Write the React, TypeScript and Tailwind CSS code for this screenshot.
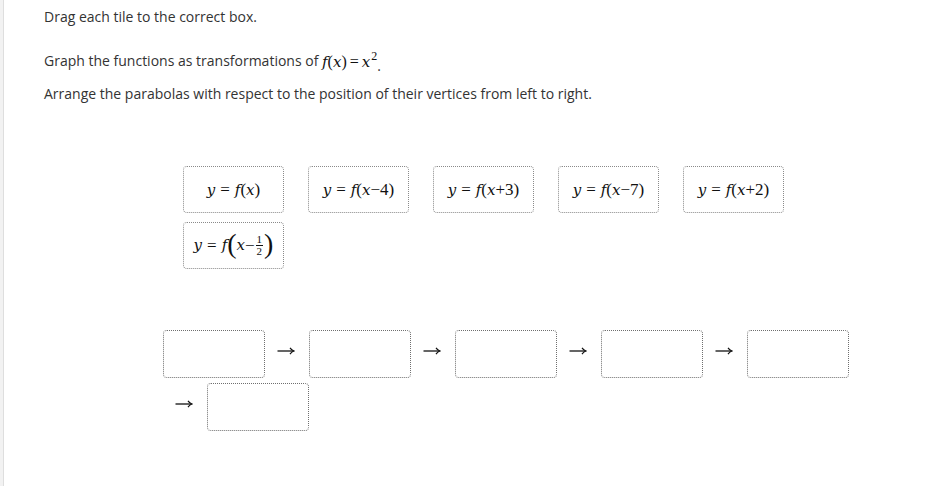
const tiles = ["f(x)", "f(x−4)", "f(x+3)", "f(x−7)", "f(x+2)"];

// Liberation Serif has no italic face here, so variables use DejaVu Serif italic
const serif = "font-['Liberation_Serif',serif]";
const mi = "font-['DejaVu_Serif',serif] italic text-[15px]";

function TileMath({ expr }: { expr: string }) {
  const rest = expr.slice(3, -1);
  return (
    <span className={`${serif} text-[17px] text-[#111] whitespace-nowrap`}>
      <i className={mi}>y</i>
      <span className="mx-[5px]">=</span>
      <i className={mi}>f</i>
      <span>(</span>
      <i className={mi}>x</i>
      {rest && <span>{rest}</span>}
      <span>)</span>
    </span>
  );
}

function HalfTile() {
  return (
    <span className={`${serif} inline-flex items-center text-[17px] text-[#111] whitespace-nowrap`}>
      <i className={mi}>y</i>
      <span className="mx-[5px]">=</span>
      <i className={mi}>f</i>
      <span className="text-[28px] leading-none -mt-[3px]">(</span>
      <i className={mi}>x</i>
      <span>−</span>
      <span className="inline-flex flex-col items-center text-[11px] leading-[11px] mx-[1px]">
        <span>1</span>
        <span className="border-t border-[#111] px-[1px]">2</span>
      </span>
      <span className="text-[28px] leading-none -mt-[3px]">)</span>
    </span>
  );
}

function Tile({ children }: { children: React.ReactNode }) {
  return (
    <div className="w-[101px] h-[47px] flex items-center justify-center rounded-[4px] border border-dotted border-[#8a8a8a] bg-white">
      {children}
    </div>
  );
}

function DropBox() {
  return (
    <div className="w-[102px] h-[48px] rounded-[4px] border border-dotted border-[#6f6f6f] bg-white" />
  );
}

function Arrow() {
  return (
    <div className="w-[44px] h-[48px] flex items-center justify-center">
      <svg width="18" height="10" viewBox="0 0 18 10" className="-mt-[6px] -ml-[2px]">
        <path d="M0.5 5 H16.5" stroke="#111" strokeWidth="1.3" fill="none" />
        <path d="M13 1.8 Q14.6 4.2 17 5 Q14.6 5.8 13 8.2" stroke="#111" strokeWidth="1.2" fill="none" />
      </svg>
    </div>
  );
}

export default function App() {
  const slots = [0, 1, 2, 3, 4, 5];
  return (
    <div className="w-[936px] h-[486px] bg-white flex overflow-hidden">
      <div className="w-[4px] bg-[#f2f2f2] border-r border-[#dedede]" />
      <div className="flex-1 pl-[40px] pt-[7px] font-['Open_Sans',sans-serif] text-[14px] text-[#333]">
        <p className="leading-[20px]">Drag each tile to the correct box.</p>

        <p className="mt-[23px] leading-[22px] flex items-end">
          <span>Graph the functions as transformations of&nbsp;</span>
          <span className={`${serif} text-[16px] text-[#111] -mb-[1px]`}>
            <i className={mi}>f</i>(<i className={mi}>x</i>)
            <span className="mx-[3px]">=</span>
            <i className={mi}>x</i>
            <sup className="text-[12px] -top-[7px] ml-[1px]">2</sup>
          </span>
          <span className="mb-[-5px]">.</span>
        </p>

        <p className="mt-[12px] leading-[20px]">
          Arrange the parabolas with respect to the position of their vertices from left to right.
        </p>

        <div className="ml-[139px] mt-[62px] w-[605px] flex flex-wrap gap-x-[24px] gap-y-[9px]">
          {tiles.map((t) => (
            <Tile key={t}>
              <TileMath expr={t} />
            </Tile>
          ))}
          <Tile>
            <HalfTile />
          </Tile>
        </div>

        <div className="ml-[119px] mt-[61px] w-[690px] flex flex-wrap gap-y-[5px]">
          {slots.map((s) => (
            <div key={s} className="flex">
              {s > 0 && <Arrow />}
              <DropBox />
            </div>
          ))}
        </div>
      </div>
    </div>
  );
}
